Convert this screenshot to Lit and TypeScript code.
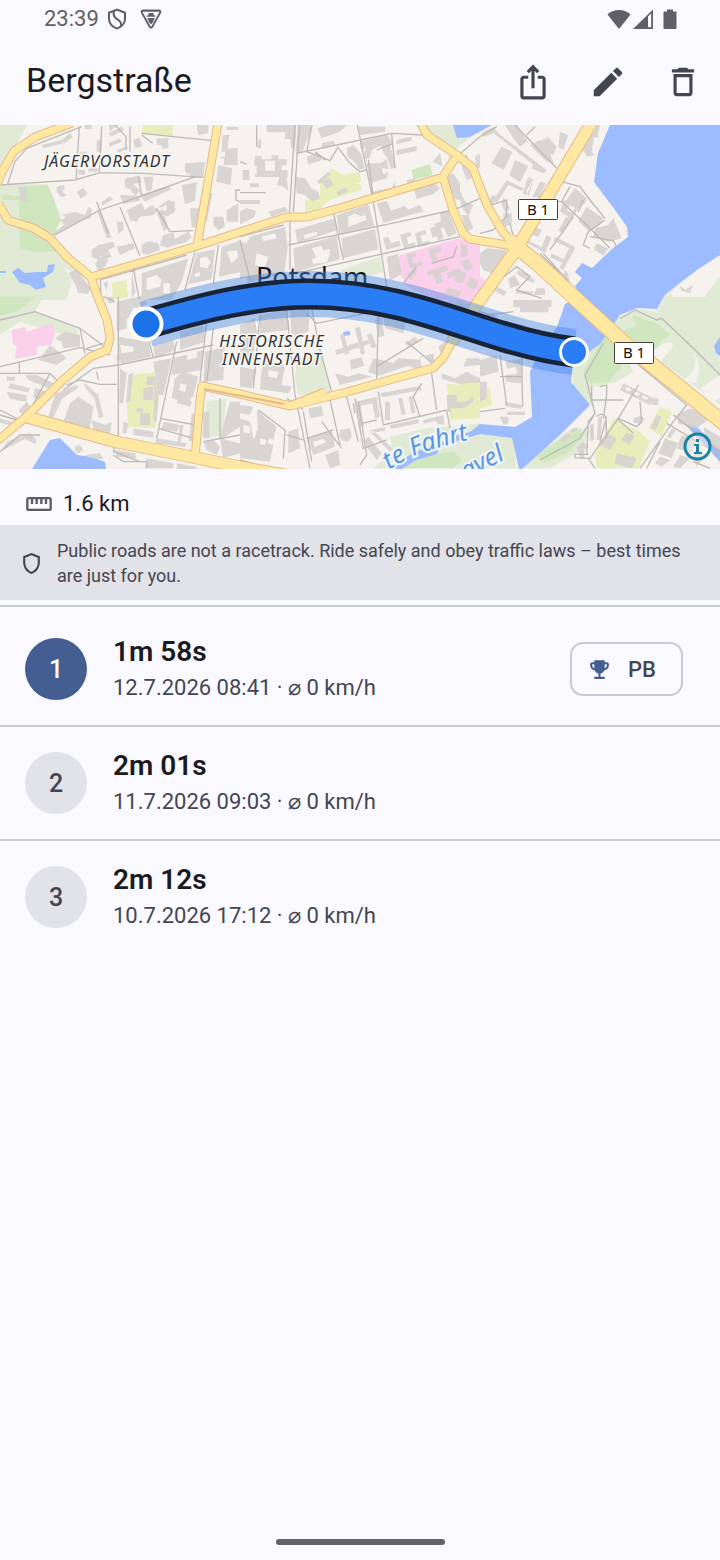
import { LitElement, html, svg, css } from "lit";
import { customElement, property } from "lit/decorators.js";
import { classMap } from "lit/directives/class-map.js";

/** One sheet of the city map. Sheets are drawn on a 720 x 540 grid and placed at a third of that size. */
interface Sheet {
  x: number;
  y: number;
  park: string;
  grove: string;
  lawn: string;
  campus: string;
  buildings: string;
  yards: string;
  lanes: string;
}

const SHEETS: Sheet[] = [
  {
    x: 0,
    y: 120,
    park: "M0 15H80L30 110L0 165ZM0 195L142 192L160 230L185 300L160 345L110 320L30 300L0 260ZM0 290L30 310L110 335L150 365L260 480L190 440L215 480L200 540H0Z",
    grove: "M60 200L142 195L160 235L182 300L160 340L110 320L60 305L55 240L10 240L0 220L60 230ZM58 320L110 335L150 360L180 395L100 395L60 385Z",
    lawn: "M430 15H522L515 50L425 42ZM335 490L378 480L385 530L340 540Z",
    campus: "",
    buildings:
      "M125 75l60-15 5 10-60 15zM185 60l25-20 8 10-25 20zM325 40l40-20 8 10-38 20zM325 70l35-15 5 10-35 15zM350 90l30-12 5 8-30 12zM400 60l20-8 5 28-20 5zM470 55h35v30h-20v-10h-15zM290 60h15v35h-15zM325 15h30l-25 18zM240 95h20v25h-20zM265 145h28v10h-28zM235 150h20v14h-20zM255 15h20v12h-20zM590 15h35v25l-30 5zM668 45h20l-10 70h-15zM675 85h38v50h-42zM655 135l42 10-5 50-44-10zM680 20h35v10h-35zM555 130l60-5-5 45-28 3-27-18zM170 200l20-5 5 12-10 5 15 15-15 5-15-15zM230 215l20-12 12 18-20 15zM185 285l40-10 30 10 10-25 12 8-5 25-50 20-60 35-5-8 35-25-10-15 15-8zM290 270l10-3 35 85-15 3zM350 305h20v25l-15 12zM275 390l20-15 45-10 5 15-20 10 10 20-25 10-5-15-10 15-20-10zM375 175l45-8 5 20-25 5 20 20-15 15-15-20-15-5zM430 170h30l-5 40-15 5zM305 245l25-15 10 8-35 20zM360 225l60 2v15l-50 10zM380 270l45-20 10 20 20-15 20 15-15 15-40 5-10 15-20-5zM420 225l60-20 25-8 10 10-80 38zM475 260l30-20 20 5v30l-25 15-15-15 15-5v-15l-20 8zM470 275l18-8 18 60-15 5zM545 195l45-8-5 55-30 10zM570 265h40v30l-15 30-20-5zM618 220h20l-18 85h-12zM640 290l30 0 5 30-20 10-15-15zM680 270l35-20v55h-35zM425 375l20-12 30 6 5 20-38 15-17-5zM490 345l30-8 5 20 40-22 10 15-15 15-60 18-20-8zM55 200h25v45l-15 3zM285 430l20-20 20 10-10 20-20 15zM350 380l50-10 5 15-45 20zM425 460l140-45-20 70-30 55h-90zM590 400l55-12-10 90-70 15zM665 380l55-18v95l-63 13zM310 490l15-8-5 30zM395 455l12 60-12 20zM205 460l30-15 10 25 28 35-10 18-28-5-10-25z",
    yards: "M440 475l30-10 15 15-5 20-40 10zM490 490h20v30h-20zM600 415l20-5 12 15-10 20-22-5zM680 395l30-5 5 20-20 20zM585 460l15-3v10l-15 5zM660 95h15v15h-15z",
    lanes:
      "M0 195L225 180L300 158L430 160L610 172M22 195L45 125L80 85L245 20M238 20L228 180M305 20L298 160M165 345L300 270L420 230L580 172M290 245L325 340M360 262L420 408M345 15L378 50V90M390 20V95M425 45L458 70M425 40L640 62M470 265L510 335L580 332M400 445L418 540M655 375L640 490M585 395L555 510M720 210H708V240L720 245M300 480L560 405M302 480V540M415 170L425 230",
  },
  {
    x: 240,
    y: 120,
    park: "M560 15H640L650 50L690 50L645 92L565 45ZM300 450L420 410L430 455L330 490Z",
    grove: "M515 150L570 133L578 165L520 180Z",
    lawn: "M240 195L275 145L310 165L360 155L365 210L270 240L235 270L195 285V240L240 235Z",
    campus: "M480 405L655 355L720 370V540H590L500 500L470 440Z",
    buildings:
      "M45 108h20v10h30v-12h20v12h25v18h-15v15h18v20h-98v-8h5v-25h-7zM105 150l32 2 8 60-15-12-20-5 8-20zM80 15h75v42h-20v-20h-55zM55 60l8-2v25l-10 3zM8 150h20v30h-20zM30 190h26v12h-26zM175 15h45l-15 35-20 52-18-10zM232 25l35-10h55l-22 20-55 20zM360 65l80-22 15 20-8 50-15-10-10-25-25 10-10 30-15-5 5-30-15 5zM470 60l45-10v12l-45 10zM470 90l60-12v15l-60 12zM435 95l20-5 10 50-12 8zM355 20h80v15l-75 10zM245 70l35-8 5 12-38 10zM200 110l30-12 20 10-10 15-35 10zM230 185l35-30 8 8-35 30zM245 185l25-10 10 20-20 12zM165 170l30 5 20 30 20 10 5 20-25 10-20-20-25-5zM290 215l25-12 10 10-30 15zM320 85l20-10 25 30 8 40-15 5-15-25-20-15zM380 130l10 60 50-15 5-20-15 8-5-20 20 5-5-30-20 12zM395 215l60-12 10-18 5 30 35-15-5-20 25-5 5 20-50 20-80 25zM520 195l50-15 20 15 10 12-20 15-50 15zM410 250l30-8 15 30 40-15 10 12 35-15 10 20-120 35zM600 100l8 40-30-15zM615 175l25-15 20 30 0 50-20-5zM680 100l-15 40 15 40 25-8-15-30zM650 190l25 55 25 10-15 35-20-30zM705 110l15-8v40l-10 5zM665 285h20l15 40-20 10zM600 280l25-10 25 70-25 12-15-30-20 8-8-18 20-8zM0 240h60v12h-60zM0 275l20-10 30 8-10 20-40 20zM85 275l50-15 10 12-50 18zM30 350l105-30 8 60-10 80-110 30-20-90zM0 370l15-3 20 100-35 10zM165 330l120-35 8 35-120 40zM160 385l130-38 10 70-135 40zM290 285l95-32 18 65-105 28zM305 355l100-28 10 60-105 28zM430 355l15-5 8 20 25-8 5 15-45 12zM480 345l30-10 5 12-15 5 5 20 20-5 3 12-35 8zM525 340l30-10 5 12-18 5 5 20 20-5 3 10-35 10zM570 325l30-10 10 40-15 8-5-15-12 5zM440 410l35-8 10 60-35 20zM150 15h20l-5 70h-12zM500 405l25-10 5 12-15 5 5 20 25-10 5 12-40 12zM565 390l35-12 5 15-20 8 10 20-18 5zM560 455l60-20 5 15-25 10 10 25-20 8-10-30-15 5zM620 460l35-15 25 20-12 25-25-5 5-15-25 5zM660 370l20 5 5 30-20 8zM660 425l25-8 15 25-20 12zM500 465l25-20 8 10-20 25zM625 500l40 15-10 20-40-15zM690 470l25 15-12 25-25-15z",
    yards: "M75 122h30v30h-30zM65 350l40-10 5 15-40 8zM50 400l35 10-10 30-30-5zM215 385l30-8 5 15 20-5v15l-10 25-40 5-5-15 15-5zM325 290l20-10 20 10 10-8 5 18-55 20zM190 345l40-10 3 10-38 12zM345 190l35-8 5 15z",
    lanes:
      "M165 15L148 285M178 15L160 275M168 100L290 75L455 40L550 45M50 15V80M215 20L200 95L240 110L270 122L292 85M292 80L330 130L360 155L378 150M352 15L400 245M385 120L400 235M455 42L465 145M400 245L440 500M0 125L20 133M0 218H78M150 285V450M280 275L310 420M145 375L410 320L640 270L720 235M145 465L480 390L660 350M0 350L130 315M0 360L30 480M225 95L255 120M410 90L460 70M720 50L650 110M575 430L640 410L650 380M490 490L530 440",
  },
  {
    x: 480,
    y: 120,
    park: "M720 470L680 520L675 540H720ZM570 510L580 540H560Z",
    grove: "",
    lawn: "",
    campus: "M0 470L18 480L0 510Z",
    buildings:
      "M65 80l32 15-25 55-38-20zM105 120l40 18-25 48-32-20zM40 20l15 20 145 110-8 10-150-120-30 10-8-10zM75 15h35l40 60 30-15 25 20 15 50-20-5-60-60-20 15-20-25zM185 60l20-10 25 30-10 25-20-10zM240 35l25 10-15 45-15-8zM300 80l15-20 30-25-10 60 8 10-20 5zM340 15h20l-8 40-12-8zM160 130l40 20-10 10-35-15zM145 170l15 10-20 45-12-5zM160 180l-20 30 5 20zM40 240l40-60 50 25-5 8-40-18-35 55zM70 230l20 35-15 12-10-22zM180 185l18 5-20 45-20-5zM285 205l35 30-5 15-30 20-30-25zM250 240l50 20-25 35-35-20zM320 260l50 35-10 20-35 18-30-30zM345 325l40-10 15-20 15 35 10 25-40 10-45-15zM350 370l35 15-15 22-30-20zM0 400l20-15 60 5-25 50-20 20-25-10-10-20zM165 320l20 10-10 20-20-5zM200 345l15 8-20 45-15-5zM125 350l75 40-5 8-75-40zM225 350l60 30-5 10-60-28zM275 290l-25 50-15-8 22-40zM285 385l-35 65-12-6 32-65zM215 400l40 20-5 10-40-18zM255 450l-10 30 25 15-6-35zM20 245l20-20 10 8-20 30zM70 280h25v30l-25 15zM85 475l20-10 15 30-30 10zM50 500l30 15-8 12-30-15zM115 450l50 30-6 10-50-28zM170 505h25v20h-35zM110 510l50 5-4 10-50-5zM600 495l15 15 25-15-10 25-25-8z",
    yards: "M270 255l15 8-10 15-15-8z",
    lanes:
      "M105 15L230 145M165 20L140 45M0 50L50 20M245 185L300 200L330 240L375 295M270 200L245 245L330 325L390 385M245 245L180 240M310 240L295 275M375 300L325 335L310 375L330 385M330 350L400 362L408 378M280 290L210 390M40 330L80 290V240L20 260M90 310L100 350M190 400L270 490M60 480L110 440L150 470L110 510L185 535M0 340L40 330M180 400L240 460",
  },
  {
    x: 0,
    y: 295,
    park: "M0 5H130L105 50L170 75L230 100L240 140L165 110L60 80L0 120ZM620 320L680 310L668 420L612 430Z",
    grove: "M0 5H105L60 45L0 62Z",
    lawn: "M390 240L470 230L480 290L465 400L385 395L380 330ZM560 250H585V270H560Z",
    campus: "M35 105L75 95L80 110L160 85L165 115L155 150L110 155V180L45 192L50 155L38 145Z",
    buildings:
      "M320 5h20v20h-15zM350 20l85-20 5 30-40 10-15 30-35 10zM350 80l30-10 0 30-30 10zM355 125l90 15 8 45-90 20-10-50zM165 130l30-20 45 10 0 35-50 5-5-20zM150 150l50 40-30 20-55-15zM460 150l60-15 5 30-60 25zM540 110l70-20 5 50-75 25zM520 190l90-25-5 60-90 15zM460 200l55-10-25 110h-15zM550 230l45 15-20 80-60-15 10-60zM615 170l60-15-5 100-60 5zM75 240h35l50 25-15 15-60-25zM20 245h25v12h-25zM30 265l60 15-5 12-60-12zM20 290l60 10v20l-50-8zM105 280l40 10-25 25-20-8zM80 320l15 20-25 20-15-12zM210 325l25-20 45 30-15 65-25-5-30 20-20-35zM195 370l55-45 30 10-10 65-65-20zM215 275l15-5 5 8-50 35-25 55-15-5 20-65zM255 265l40 35 15 65-12 5-15-60-30-35zM275 375l40 15 20-10-5 40-50-15zM440 245h25v25h-25zM430 280l30-5v40h-30zM420 355h30v35h-30zM385 240l15-8-10 85-12 5zM360 220l20 15-10 90h-12zM410 340h20v12h-20zM465 245l10 70-5 65-10-5zM370 380l15 5-5 30h-12zM400 400l60 10v18l-60-8zM490 380l50 10-10 20-45-8zM575 355l30 8-10 80-28-5zM540 390l10 0-8 60-10-3zM470 430l90 15-5 12-90-12zM540 290l45 15-15 30-40-10zM610 350h18v80h-20zM690 320h30v75l-60 40 12-50zM610 440l30-5 20 20-10 25-30-15zM660 430l60 15v30l-50 15zM0 370l50 15-5 10-45-12zM20 440l70-25 20 20-5 12-30-15-70 35zM225 455l15-5 10 15-15 10-12-8zM255 480l45-5 10 18-40-4zM345 465l60 10 5 15-60-5zM440 490l80 15v15h-85zM530 505l60 10v8h-60zM480 0l-5 8zM350 180h15v20h-15z",
    yards: "M360 150l40 5 0 15-35 5zM560 175l30-8 2 20-30 8zM540 265l20 5-5 20-18-4zM575 305h10v15h-15z",
    lanes:
      "M0 75L105 50L240 100L320 160M0 215L240 158L330 180M0 235H150L175 260M150 235L90 345M58 200V235M0 345L60 375M190 285L280 220L355 210L640 150M355 5V420L340 470L420 500M350 268H300L240 255L200 270M460 190L440 110M530 140L470 430M620 80L600 260M640 100L620 260M640 80L720 60M480 370L590 390M475 400L580 430M0 360L50 375M0 470L60 420L120 420M340 480L370 500L440 500V520M610 440L720 420M660 310V430M290 230L295 255M310 5L345 20M260 160L310 145M240 100L255 175",
  },
  {
    x: 240,
    y: 295,
    park: "M170 190L245 160L250 210L275 290L175 300L165 250ZM450 425L560 400L720 385V520H400L460 470Z",
    grove: "M500 500L560 480L640 470L665 495L640 520H490Z",
    lawn: "M620 265L655 270L690 250L720 255V370L630 375L625 310Z",
    campus: "M540 95L600 50L640 0H720V40L640 130L580 100Z",
    buildings:
      "M60 60l80-15 10 60-90 10zM0 90l45-20 10 75-55 15zM75 200l60 10-10 60 30 5-10 20-85-12 5-60zM0 130l40-5 5 65-45 10zM0 215l50 10-15 55-35-5zM300 120l12-5 15 60-12 5zM345 100l15-5 15 80-12 5zM325 150l60-15 4 12-58 18zM285 165l45-12 5 12-45 15zM330 195l35-8 8 25-40 12zM380 120l15-5 15 40-15 5zM400 190l-15 40 30 12 90-30 30 12 35-5 5-15-20-25-20 15-60-5-15 15-30-8zM285 235l40 10 30-10 40 10-95 25zM495 145l30-20 12 12-30 20zM540 185l40-10 5 30-40 10zM595 155l25-20 8 35-20 20zM420 295l120-22 5 12-120 22zM435 320h15v55h-15zM475 310l12-2 10 50-12 3zM505 305l12-2 10 50-12 3zM345 320l65-15 10 60-15 5-8-45-35 8 10 60-12 4zM205 340l40-8 5 30-40 8zM390 405l45-8v10l-45 8zM450 390l85-18 3 12-85 18zM550 375l60-15 3 30-20-2-5-10-38 8zM620 300h30v20h25l25-15v15l-30 20h-40l5 10h-12zM605 235l40 15 35-20 40 20v12l-60 5-55-15zM680 190h40v20l-50 5zM0 330l40 5-10 25-30-5zM50 345l60 50-10 40-45-20zM0 370l30 10 10 50 60 20-10 50-90-10zM50 405l40 15-8 30-40-10zM145 410l30-10 5 60-35 15zM200 430l75-25 10 50-65 25zM300 405l30-5 5 25-12 15-15-3-10-15zM255 480l40-15 5 45-30 10zM370 440l15-15 40 50-15 20zM390 410l60 60 10-8-60-55zM405 75l20-8 8 55-18 5zM430 60l70 15-10 40-55-15zM150 45l60-5-5 70-50 15zM640 30l20-15 30 15-30 20z",
    yards: "M60 430l20 5-5 15-15-3zM220 440l30-8 8 10-35 15zM85 225l30 5-5 20-25-5zM10 390l20 5 0 20-20-3zM365 345l30-8 5 25-30 5z",
    lanes:
      "M215 40L240 165L275 290M60 60L40 280M140 45L165 300M200 55L230 85L400 50M415 60L410 250M410 215L550 130M320 305L355 440M415 290L430 390L620 345L630 400M545 265L520 305L540 365M575 235L590 345M265 290L300 450M190 350L215 500M140 310L190 345M365 385L410 375M345 310L370 460L440 435M55 345L135 405L130 490M140 420L190 435M0 495L90 520M200 430L280 405M245 380L305 460M340 325L345 355M500 140L590 215M165 300L210 520M355 320L380 480L360 510",
  },
  {
    x: 480,
    y: 295,
    park: "M555 5H720V330L600 240L520 185L430 110L400 80L470 40L530 50ZM375 115L420 150L460 230L410 260L330 280L345 340L320 320L280 270L275 210L330 160ZM0 410L100 425L110 520H0ZM130 500L210 450L260 410L290 395L330 410L300 470L210 520H120Z",
    grove: "M375 120L405 150L425 215L385 260L330 265L310 230ZM430 110L470 90L455 60L530 85L570 120L540 140L530 185ZM170 480L230 440L300 405L310 420L270 470L190 505Z",
    lawn: "M0 280H30L35 330L0 340ZM400 370L480 410L510 440L475 520H350L345 480ZM540 335L575 350L545 425L505 400Z",
    campus: "M0 5L10 20L0 35Z",
    buildings:
      "M100 15h115v22h-10v15h-85v-15h-20zM0 195l50-15 5 50-55 15zM75 200l45-8 8 40-15 5-5-22-25 6zM75 240l50-5-2 30-45-5zM60 365h25v20l-15 5zM75 320l50 10v12l-50-8zM0 260h20v50l-20 10zM80 350h55v10h-55zM430 265l90 45-10 20-90-45zM515 310h20v20h-20zM590 360l40-20 40 15 15 20-35 25-55-15zM380 415l30 15-20 35-35-18zM440 412l25 12-18 25-22-15zM410 475l60 15-15 30-20-5-30-10zM530 360l15 5-18 40-15-5zM555 430l40 15-20 45-40-15zM540 485l30 10-25 20-20-10zM605 420l45 15-15 40-45-15zM600 480l30 10-30 30-20-5zM640 470l40 10-30 35zM670 395l50 30v40l-40-20zM290 455l20-15 15 15-12 10v25h-12zM330 390l12-5 0 50-12 3zM355 365l12 0-5 70-12 0zM240 430l25-15 8 8-25 18zM270 405l20-8 4 10-20 8zM460 370l20-8 15 10-15 15-20-5zM575 400l12 5-15 25-12-5z",
    yards: "M440 275l15 8-5 8-15-8zM465 288l15 8-5 8-15-8zM490 300l15 8-5 8-15-8zM520 240C540 180 600 160 570 140C540 150 520 160 515 180L550 215L610 255C640 240 660 200 635 170C660 190 665 230 645 265L600 250ZM660 280L720 240V310L700 320Z",
    lanes:
      "M420 70L465 45L530 75L545 70L640 160L720 240M370 145L315 240L345 355L325 380L320 480M345 355L300 430L180 495M370 370L380 300V270L360 275M430 315H335V275M420 150L470 205L620 330L580 380L480 520M475 270L415 370L330 490L285 488V478L325 478M415 370L470 395L485 380L480 320M325 490L345 520M560 385L720 480M580 360L720 470M380 365L360 440M350 365C355 355 375 355 378 370L380 430M60 180L80 330M125 190L128 335M0 350L75 340M60 245H125M20 60L100 50M500 520L540 440M690 520L640 500M0 50L50 65M410 370L460 415",
  },
];

const WATER =
  "M610 125L598 153L594 182L615 210L627 227L628 237L613 248L592 268L582 263L575 272L582 278L575 286L580 296L565 304L557 327L540 350L530 372L532 417L515 427L480 424L470 432L455 436L432 447L414 452L400 462L390 469H402L416 460L437 454L440 446L480 434L512 438L519 469H522L560 435L590 405L571 382L573 364L600 344L620 315L637 308L657 309L665 295L680 283L697 270L720 255V125ZM453 125L457 138L470 137L492 125ZM32 469L50 440L60 438L66 444L77 455L92 457L105 462L106 469ZM12 272L18 268L25 273L37 272L47 272L48 265L55 264L53 272L43 278L46 287L36 290L30 285L20 283ZM0 271L6 271V273H0ZM720 337L714 346L716 353L720 356ZM685 424L695 425L710 440L720 448V462L705 445L692 432ZM343 332L350 331V335L343 336Z";

const MAIN_ROADS =
  "M72 123L35 137L14 151L3 170L-3 184M-2 203L8 220L33 228L50 238L67 257L91 277L97 295L107 320L110 338L107 350L90 357L63 380L27 416L-3 441M91 277L150 260L197 246L240 232L287 217L307 217L333 210L373 198L443 177L457 155L427 135L420 122M457 155L473 168L480 187L488 207L503 232L517 248M443 177L453 210L463 233L470 239L507 245M218 123L197 246M452 342L443 358L433 368L400 377L347 392L290 406L240 394L202 386L200 400L195 458M290 406L325 392";
const TRUNK_ROADS = "M592 122L517 248L480 300L452 342M27 417L73 430L117 442L197 458L240 467L290 476";
const B1_EAST = "M508 240L537 263L577 300L623 342L667 377L725 424";
const ROUTE = "M146 324C205 307 255 294 310 294C390 294 450 321 505 337C535 346 555 350 574 352";

@customElement("segment-map")
class SegmentMap extends LitElement {
  static styles = css`
    :host { display: block; }
    .map { display: block; width: 100%; height: auto; background: #f6f3ef; }
    .park { fill: #e0ead5; }
    .grove { fill: #cfe6be; }
    .lawn { fill: #e8edbc; }
    .campus { fill: #fbd0ea; }
    .building { fill: #d6d2cf; fill-opacity: 0.9; }
    .yard { fill: #f6f3ef; }
    .lane { fill: none; stroke: #bdbab8; stroke-width: 4; }
    .water { fill: #9dbcff; }
    .road { fill: none; stroke-linejoin: round; }
    .casing { stroke: #e5b98c; }
    .surface { stroke: #ffe8a1; }
    .main.casing { stroke-width: 9; }
    .main.surface { stroke-width: 7; }
    .trunk.casing { stroke-width: 13; }
    .trunk.surface { stroke-width: 11; }
    .b1.casing { stroke-width: 16; }
    .b1.surface { stroke-width: 14; }
    .median { fill: none; stroke: #e5b98c; stroke-width: 2; }
    .city { font: 27px "Noto Sans", sans-serif; fill: #14161d; }
    .district {
      font: italic 16px "Noto Sans", sans-serif; letter-spacing: 1px; text-anchor: middle;
      fill: #303236; stroke: #f8f6f3; stroke-width: 3; paint-order: stroke;
    }
    .river {
      font: italic 25px "Noto Sans", sans-serif;
      fill: #5b94e0; stroke: #eef5fa; stroke-width: 4; paint-order: stroke;
    }
    .sign { fill: #fff; stroke: #44423f; stroke-width: 1; }
    .sign-text { font: 15px "Noto Sans", sans-serif; text-anchor: middle; fill: #111; }
    .halo { fill: none; stroke: #4185e8; stroke-opacity: 0.42; stroke-width: 46; }
    .edge { fill: none; stroke: #172437; stroke-width: 31; }
    .route { fill: none; stroke: #2b7df6; stroke-width: 22; }
    .start { fill: #1a73e8; stroke: #fff; stroke-width: 4; }
    .finish { fill: #2b7df6; stroke: #fff; stroke-width: 3; }
    .info { fill: #fff; fill-opacity: 0.35; stroke: #1a84a5; stroke-width: 3; }
    .info-i { fill: none; stroke: #1a84a5; stroke-width: 3; }
    .info-serif { fill: none; stroke: #1a84a5; stroke-width: 2; }
  `;

  private layer(kind: string, key: "park" | "grove" | "lawn" | "campus" | "buildings" | "yards" | "lanes") {
    return SHEETS.map(
      (s) => svg`<path class=${kind} transform="translate(${s.x} ${s.y}) scale(0.3333)" d=${s[key]}></path>`
    );
  }

  render() {
    return html`
      <svg class="map" viewBox="0 125 720 344" role="img" aria-label="Map of the segment in Potsdam">
        ${this.layer("park", "park")} ${this.layer("grove", "grove")} ${this.layer("lawn", "lawn")}
        ${this.layer("campus", "campus")}
        <path class="water" d=${WATER}></path>
        ${this.layer("building", "buildings")} ${this.layer("yard", "yards")} ${this.layer("lane", "lanes")}
        <path class="road b1 casing" d=${B1_EAST}></path>
        <path class="road trunk casing" d=${TRUNK_ROADS}></path>
        <path class="road main casing" d=${MAIN_ROADS}></path>
        <path class="road b1 surface" d=${B1_EAST}></path>
        <path class="road trunk surface" d=${TRUNK_ROADS}></path>
        <path class="road main surface" d=${MAIN_ROADS}></path>
        <path class="median" d="M204 389L284 404"></path>
        <text class="city" x="256" y="287">Potsdam</text>
        <text class="district" x="107" y="167">JÄGERVORSTADT</text>
        <text class="district" x="272" y="347">HISTORISCHE</text>
        <text class="district" x="272" y="365">INNENSTADT</text>
        <path id="fahrt" fill="none" d="M389 470Q410 456 430 450T500 432"></path>
        <path id="havel" fill="none" d="M466 480L530 446"></path>
        <text class="river"><textPath href="#fahrt">te Fahrt</textPath></text>
        <text class="river"><textPath href="#havel">avel</textPath></text>
        <rect class="sign" x="518.500" y="199.500" width="39" height="20" rx="1"></rect>
        <text class="sign-text" x="538" y="215">B 1</text>
        <rect class="sign" x="614.500" y="342.500" width="39" height="21" rx="1"></rect>
        <text class="sign-text" x="634" y="358">B 1</text>
        <path class="halo" d=${ROUTE}></path>
        <path class="edge" d=${ROUTE}></path>
        <path class="route" d=${ROUTE}></path>
        <circle class="start" cx="146" cy="324" r="15.500"></circle>
        <circle class="finish" cx="574" cy="352" r="13.500"></circle>
        <circle class="info" cx="697.500" cy="446.500" r="12.500"></circle>
        <path class="info-i" d="M697.500 439V442M697.500 444V453"></path>
        <path class="info-serif" d="M694 445H698M694 453H702"></path>
      </svg>
    `;
  }
}

interface Effort {
  time: string;
  detail: string;
  best: boolean;
}

@customElement("effort-row")
class EffortRow extends LitElement {
  @property({ type: Number }) rank = 0;
  @property({ attribute: false }) effort!: Effort;

  static styles = css`
    :host { display: flex; align-items: center; gap: 26px; height: 112px; padding: 0 37px 0 25px; }
    .rank {
      display: flex; align-items: center; justify-content: center; flex: none;
      width: 62px; height: 62px; border-radius: 50%;
      background: #e2e2e9; color: #44464f; font-size: 25px; font-weight: 500;
    }
    .rank.first { background: #445e91; color: #fff; }
    .text { flex: 1; }
    .time { margin: 0; font-size: 28px; line-height: 38px; font-weight: 600; color: #1a1b20; }
    .detail { margin: 0; font-size: 22px; line-height: 34px; color: #44464f; }
    .badge {
      display: flex; align-items: center; gap: 16px; height: 54px; box-sizing: border-box;
      padding: 0 25px 0 15px; border: 2px solid #c9cad3; border-radius: 13px;
      font-size: 22px; font-weight: 500; color: #44464f;
    }
    .trophy { width: 25px; height: 25px; fill: #445e91; }
  `;

  render() {
    return html`
      <div class=${classMap({ rank: true, first: this.effort.best })}>${this.rank}</div>
      <div class="text">
        <p class="time">${this.effort.time}</p>
        <p class="detail">${this.effort.detail}</p>
      </div>
      ${this.effort.best
        ? html`<div class="badge">
            <svg class="trophy" viewBox="0 0 24 24" aria-hidden="true">
              <path d="M19 5h-2V3H7v2H5c-1.100 0-2 .9-2 2v1c0 2.550 1.920 4.630 4.390 4.940.63 1.500 1.980 2.630 3.610 2.960V19H7v2h10v-2h-4v-3.100c1.630-.33 2.980-1.460 3.610-2.960C19.080 12.630 21 10.550 21 8V7c0-1.100-.9-2-2-2zM5 8V7h2v3.820C5.840 10.400 5 9.300 5 8zm14 0c0 1.300-.84 2.400-2 2.820V7h2v1z"></path>
            </svg>
            PB
          </div>`
        : ""}
    `;
  }
}

@customElement("app-root")
class AppRoot extends LitElement {
  private efforts: Effort[] = [
    { time: "1m 58s", detail: "12.7.2026 08:41 · ⌀ 0 km/h", best: true },
    { time: "2m 01s", detail: "11.7.2026 09:03 · ⌀ 0 km/h", best: false },
    { time: "2m 12s", detail: "10.7.2026 17:12 · ⌀ 0 km/h", best: false },
  ];

  static styles = css`
    :host {
      display: flex; flex-direction: column; min-height: 100vh; background: #faf9ff;
      color: #1a1b20; font-family: Roboto, "Noto Sans", sans-serif;
    }
    .status { display: flex; align-items: center; height: 38px; padding: 0 43px 0 44px; color: #5f6064; }
    .clock { font-size: 22px; line-height: 38px; margin-right: 6px; }
    .status svg { fill: currentColor; }
    .glyph { width: 24px; height: 24px; }
    .vpn { margin-left: 10px; }
    .signals { display: flex; align-items: center; margin-left: auto; }
    .battery { width: 14px; height: 24px; margin-left: 8px; }
    .bar { display: flex; align-items: center; height: 87px; padding-left: 26px; }
    h1 { flex: 1; margin: 0; padding-bottom: 4px; font-size: 34px; line-height: 44px; font-weight: 400; }
    .action {
      display: flex; align-items: center; justify-content: center; width: 75px; height: 75px;
      padding: 0; border: 0; background: none; color: #44464f;
    }
    .action svg { width: 38px; height: 38px; fill: currentColor; }
    .distance {
      display: flex; align-items: center; gap: 10px; padding: 22px 25px 9px;
      font-size: 22px; line-height: 25px;
    }
    .ruler { width: 28px; height: 28px; fill: #5c5d63; margin: -2px 0; }
    .notice {
      display: flex; align-items: center; gap: 13px; padding: 13px 19px 12px;
      background: #e2e2e9; color: #44464f; font-size: 18px; line-height: 25px;
    }
    .notice p { margin: 0; }
    .shield { flex: none; width: 25px; height: 25px; fill: currentColor; }
    .efforts { list-style: none; margin: 5px 0 0; padding: 0; }
    .efforts li { border-top: 2px solid #c9cad3; }
    .efforts li:first-child { padding-top: 6px; }
    .gesture { width: 169px; height: 6px; border-radius: 3px; background: #616166; margin: auto auto 15px; }
  `;

  render() {
    return html`
      <div class="status">
        <span class="clock">23:39</span>
        <svg class="glyph" viewBox="0 0 24 24" aria-hidden="true">
          <path fill-rule="evenodd" d="M12 1.500L3 5v6.500c0 5.200 3.600 9.300 9 11 5.400-1.700 9-5.800 9-11V5zM9.800 4.700C9.300 8.700 11 10 13 11.400c2.300 1.600 4 3.300 4 6.200 1.300-1.700 2-3.800 2-6.100V6.400L12 3.700zM7.700 5.500L5 6.500v5c0 4.200 2.800 7.500 7 8.900 1.100-.4 2.100-.9 3-1.600.6-3-1.200-4.200-3.400-5.800C9.400 11.400 7.300 9.600 7.700 5.500z"></path>
        </svg>
        <svg class="glyph vpn" viewBox="0 0 24 24" aria-hidden="true">
          <path fill-rule="evenodd" d="M4 2.500h16c2 0 3 2 2 3.600l-8 14.400c-.9 1.500-3.100 1.500-4 0L2 6.100C1 4.500 2 2.500 4 2.500zm.2 2.200c-.5 0-.6.4-.4.7l7.700 13.800c.2.400.8.400 1 0l7.700-13.800c.2-.3.100-.7-.4-.7z"></path>
          <path d="M9.800 6h4.400l.8 2.500h1.500v1.300h-9V8.500H9zM8.500 11h7v1.500l-1.500.5 1 1-3 3.500-3-3.500 1-1-1.500-.5z"></path>
        </svg>
        <div class="signals">
          <svg class="glyph" viewBox="0 0 24 24" aria-hidden="true"><path d="M12 22L.5 7.500C3.500 4.500 7.500 3 12 3s8.500 1.500 11.500 4.500z"></path></svg>
          <svg class="glyph" viewBox="0 0 24 24" aria-hidden="true"><path fill-rule="evenodd" d="M2 22L22 2.500V22zM17 9.500V20.200h3.200V6.500z"></path></svg>
          <svg class="battery" viewBox="0 0 14 24" aria-hidden="true"><path d="M4 2.500h6v2h2.500c.8 0 1 .4 1 1V21c0 .7-.3 1-1 1h-11c-.7 0-1-.3-1-1V5.500c0-.6.300-1 1-1H4z"></path></svg>
        </div>
      </div>
      <header class="bar">
        <h1>Bergstraße</h1>
        <button class="action" aria-label="Share">
          <svg viewBox="0 0 24 24"><path d="M16 5l-1.420 1.420-1.590-1.590V16h-1.980V4.830L9.420 6.420 8 5l4-4 4 4zm4 5v11c0 1.100-.9 2-2 2H6c-1.110 0-2-.9-2-2V10c0-1.110.89-2 2-2h3v2H6v11h12V10h-3V8h3c1.100 0 2 .89 2 2z"></path></svg>
        </button>
        <button class="action" aria-label="Edit">
          <svg viewBox="0 0 24 24"><path d="M3 17.250V21h3.750L17.810 9.940l-3.750-3.750L3 17.250zM20.710 7.040c.39-.39.39-1.020 0-1.410l-2.340-2.340c-.39-.39-1.020-.39-1.410 0l-1.830 1.830 3.750 3.750 1.830-1.830z"></path></svg>
        </button>
        <button class="action" aria-label="Delete">
          <svg viewBox="0 0 24 24"><path d="M6 19c0 1.100.9 2 2 2h8c1.100 0 2-.9 2-2V7H6v12zM8 9h8v10H8V9zm7.500-5l-1-1h-5l-1 1H5v2h14V4z"></path></svg>
        </button>
      </header>
      <segment-map></segment-map>
      <div class="distance">
        <svg class="ruler" viewBox="0 0 24 24" aria-hidden="true"><path d="M21 6H3c-1.100 0-2 .9-2 2v8c0 1.100.9 2 2 2h18c1.100 0 2-.9 2-2V8c0-1.100-.9-2-2-2zm0 10H3V8h2v4h2V8h2v4h2V8h2v4h2V8h2v4h2V8h2v8z"></path></svg>
        <span>1.6 km</span>
      </div>
      <div class="notice">
        <svg class="shield" viewBox="0 0 24 24" aria-hidden="true"><path d="M12 2L4 5v6.090c0 5.050 3.410 9.760 8 10.910 4.590-1.150 8-5.860 8-10.910V5l-8-3zm6 9.090c0 4-2.550 7.700-6 8.830-3.450-1.130-6-4.820-6-8.830v-4.700l6-2.250 6 2.250v4.700z"></path></svg>
        <p>Public roads are not a racetrack. Ride safely and obey traffic laws – best times are just for you.</p>
      </div>
      <ol class="efforts">
        ${this.efforts.map((e, i) => html`<li><effort-row .rank=${i + 1} .effort=${e}></effort-row></li>`)}
      </ol>
      <div class="gesture"></div>
    `;
  }
}
